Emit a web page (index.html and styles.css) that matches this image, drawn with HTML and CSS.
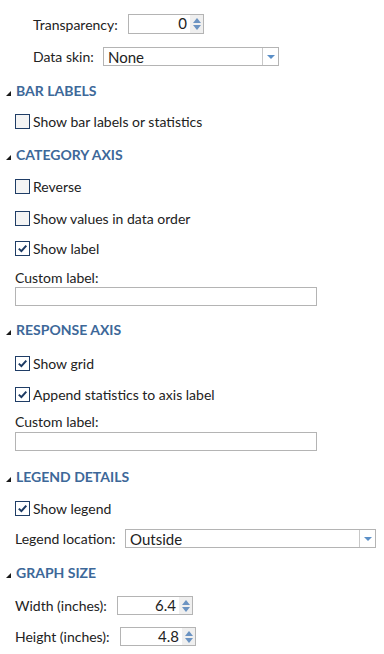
FILE: index.html
```html
<!DOCTYPE html>
<html>
<head>
<meta charset="utf-8">
<link rel="stylesheet" href="styles.css">
</head>
<body>
<div class="panel">
  <div class="field r1">
    <span class="lbl lbl-transp">Transparency:</span>
    <div class="num num-transp"><span class="val">0</span><span class="spin"><i class="up"></i><i class="dn"></i></span></div>
  </div>
  <div class="field r2">
    <span class="lbl lbl-skin">Data skin:</span>
    <div class="select sel-skin"><span class="sval">None</span><span class="sbtn"><i class="dn"></i></span></div>
  </div>

  <div class="hdr m16"><span class="tri"></span>BAR LABELS</div>
  <div class="cb m14"><span class="box"></span>Show bar labels or statistics</div>

  <div class="hdr m17"><span class="tri"></span>CATEGORY AXIS</div>
  <div class="cb m15"><span class="box"></span>Reverse</div>
  <div class="cb m17"><span class="box"></span>Show values in data order</div>
  <div class="cb m15"><span class="box on"><svg viewBox="0 0 13 13" width="13" height="13"><path d="M2.8 6.6 L5.4 9.1 L10.3 3.6" fill="none" stroke="#1d3a63" stroke-width="2"/></svg></span>Show label</div>
  <div class="txtlbl m13">Custom label:</div>
  <div class="tinput m1"></div>

  <div class="hdr m15"><span class="tri"></span>RESPONSE AXIS</div>
  <div class="cb m17"><span class="box on"><svg viewBox="0 0 13 13" width="13" height="13"><path d="M2.8 6.6 L5.4 9.1 L10.3 3.6" fill="none" stroke="#1d3a63" stroke-width="2"/></svg></span>Show grid</div>
  <div class="cb m16"><span class="box on"><svg viewBox="0 0 13 13" width="13" height="13"><path d="M2.8 6.6 L5.4 9.1 L10.3 3.6" fill="none" stroke="#1d3a63" stroke-width="2"/></svg></span>Append statistics to axis label</div>
  <div class="txtlbl m11">Custom label:</div>
  <div class="tinput m2"></div>

  <div class="hdr m17"><span class="tri"></span>LEGEND DETAILS</div>
  <div class="cb m15"><span class="box on"><svg viewBox="0 0 13 13" width="13" height="13"><path d="M2.8 6.6 L5.4 9.1 L10.3 3.6" fill="none" stroke="#1d3a63" stroke-width="2"/></svg></span>Show legend</div>
  <div class="field m13 indent0">
    <span class="lbl lbl-loc">Legend location:</span>
    <div class="select sel-loc"><span class="sval">Outside</span><span class="sbtn"><i class="dn"></i></span></div>
  </div>

  <div class="hdr m16"><span class="tri"></span>GRAPH SIZE</div>
  <div class="field m14 indent0">
    <span class="lbl lbl-w">Width (inches):</span>
    <div class="num num-size"><span class="val">6.4</span><span class="spin"><i class="up"></i><i class="dn"></i></span></div>
  </div>
  <div class="field m12 indent0">
    <span class="lbl lbl-h">Height (inches):</span>
    <div class="num num-size"><span class="val">4.8</span><span class="spin"><i class="up"></i><i class="dn"></i></span></div>
  </div>
</div>
</body>
</html>
```
FILE: styles.css
```css
html, body {
  margin: 0;
  padding: 0;
  background: #ffffff;
}
body {
  font-family: Lato, "Open Sans", sans-serif;
  font-size: 14px;
  color: #222222;
}
.panel {
  display: flex;
  flex-direction: column;
  padding-top: 14px;
}
.m1 { margin-top: 1px; }
.m2 { margin-top: 2px; }
.m11 { margin-top: 11px; }
.m12 { margin-top: 12px; }
.m13 { margin-top: 13px; }
.m14 { margin-top: 14px; }
.m15 { margin-top: 15px; }
.m16 { margin-top: 16px; }
.m17 { margin-top: 17px; }

.field {
  display: flex;
  align-items: center;
  height: 19px;
  padding-left: 33px;
}
.field.indent0 { padding-left: 15px; }
.r1 { height: 20px; }
.r2 { margin-top: 13px; }
.lbl { line-height: 17px; }
.lbl-transp { width: 95px; }
.lbl-skin { width: 70px; }
.lbl-loc { width: 110px; }
.lbl-w { width: 102px; }
.lbl-h { width: 105px; }

.num {
  display: flex;
  box-sizing: border-box;
  width: 76px;
  height: 100%;
  border: 1px solid #b4b4b4;
  background: #fff;
}
.num .val {
  flex: 1;
  text-align: right;
  padding-right: 3px;
  line-height: 17px;
  font-size: 15px;
}
.spin {
  width: 13px;
  background: #efefef;
  display: flex;
  flex-direction: column;
  align-items: center;
  justify-content: center;
  gap: 2px;
}
.spin i, .sbtn i {
  display: block;
  width: 0;
  height: 0;
  border-left: 4px solid transparent;
  border-right: 4px solid transparent;
}
.spin .up { border-bottom: 5px solid #6b93c2; }
.spin .dn { border-top: 5px solid #6b93c2; }

.select {
  display: flex;
  box-sizing: border-box;
  height: 100%;
  border: 1px solid #b4b4b4;
  background: #fff;
}
.sel-skin { width: 176px; }
.sel-loc { width: 251px; }
.select .sval {
  flex: 1;
  padding-left: 4px;
  line-height: 19px;
  font-size: 15px;
}
.sbtn {
  width: 15px;
  border-left: 1px solid #c8c8c8;
  display: flex;
  align-items: center;
  justify-content: center;
}
.sbtn .dn {
  border-left-width: 4px;
  border-right-width: 4px;
  border-top: 4px solid #5b8fc7;
}

.hdr {
  position: relative;
  height: 18px;
  line-height: 18px;
  padding-left: 16px;
  font-size: 14px;
  font-weight: bold;
  color: #3d6899;
}
.tri {
  position: absolute;
  left: 6px;
  top: 9px;
  width: 0;
  height: 0;
  border-left: 5px solid transparent;
  border-bottom: 5px solid #1a1a1a;
}

.cb {
  display: flex;
  align-items: center;
  height: 15px;
  padding-left: 15px;
  line-height: 15px;
}
.box {
  box-sizing: border-box;
  width: 15px;
  height: 15px;
  border: 1px solid #1f3d66;
  background: #f4f4f4;
  margin-right: 3px;
  display: flex;
  align-items: center;
  justify-content: center;
}
.box.on { background: #ffffff; }

.txtlbl {
  padding-left: 15px;
  line-height: 17px;
  height: 17px;
}
.tinput {
  box-sizing: border-box;
  margin-left: 15px;
  width: 302px;
  height: 19px;
  border: 1px solid #b4b4b4;
  background: #fff;
}
```
